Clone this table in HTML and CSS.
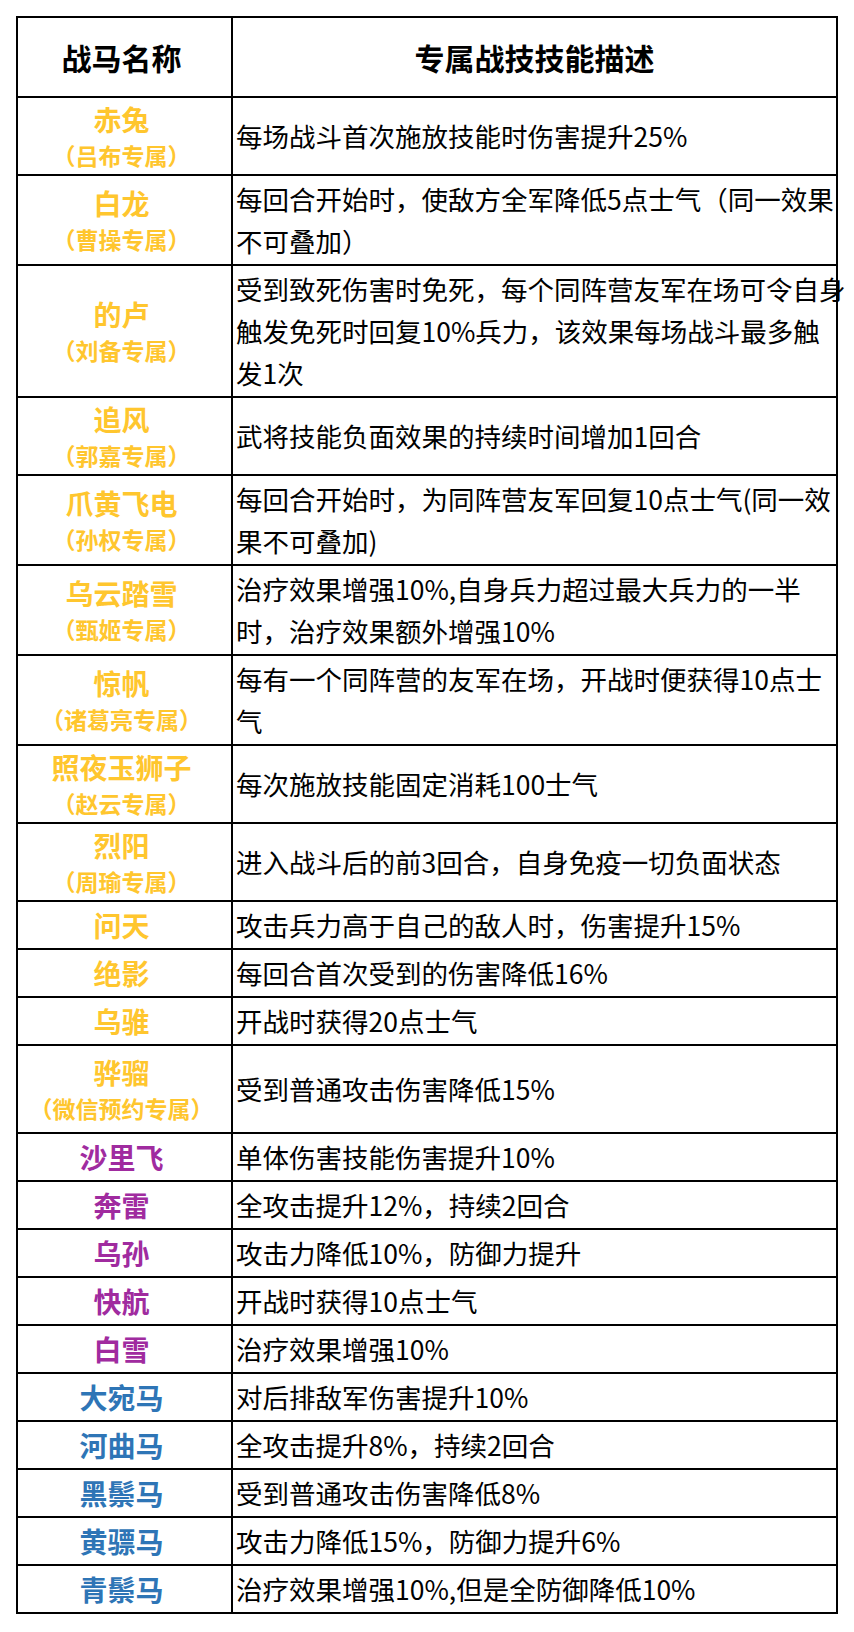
FILE: index.html
```html
<!DOCTYPE html>
<html lang="zh-CN">
<head>
<meta charset="utf-8">
<title>战马专属战技</title>
<link rel="stylesheet" href="styles.css">
</head>
<body>
<table class="horses">
  <colgroup><col class="c-name"><col class="c-desc"></colgroup>
  <thead>
    <tr><th>战马名称</th><th>专属战技技能描述</th></tr>
  </thead>
  <tbody>
    <tr><td class="name gold"><span class="nm">赤兔</span><span class="sub">（吕布专属）</span></td><td class="desc">每场战斗首次施放技能时伤害提升25%</td></tr>
    <tr><td class="name gold"><span class="nm">白龙</span><span class="sub">（曹操专属）</span></td><td class="desc">每回合开始时，使敌方全军降低5点士气（同一效果<br>不可叠加）</td></tr>
    <tr><td class="name gold"><span class="nm">的卢</span><span class="sub">（刘备专属）</span></td><td class="desc">受到致死伤害时免死，每个同阵营友军在场可令自身<br>触发免死时回复10%兵力，该效果每场战斗最多触<br>发1次</td></tr>
    <tr><td class="name gold"><span class="nm">追风</span><span class="sub">（郭嘉专属）</span></td><td class="desc">武将技能负面效果的持续时间增加1回合</td></tr>
    <tr><td class="name gold"><span class="nm">爪黄飞电</span><span class="sub">（孙权专属）</span></td><td class="desc">每回合开始时，为同阵营友军回复10点士气(同一效<br>果不可叠加)</td></tr>
    <tr><td class="name gold"><span class="nm">乌云踏雪</span><span class="sub">（甄姬专属）</span></td><td class="desc">治疗效果增强10%,自身兵力超过最大兵力的一半<br>时，治疗效果额外增强10%</td></tr>
    <tr><td class="name gold"><span class="nm">惊帆</span><span class="sub">（诸葛亮专属）</span></td><td class="desc">每有一个同阵营的友军在场，开战时便获得10点士<br>气</td></tr>
    <tr><td class="name gold"><span class="nm">照夜玉狮子</span><span class="sub">（赵云专属）</span></td><td class="desc">每次施放技能固定消耗100士气</td></tr>
    <tr><td class="name gold"><span class="nm">烈阳</span><span class="sub">（周瑜专属）</span></td><td class="desc">进入战斗后的前3回合，自身免疫一切负面状态</td></tr>
    <tr><td class="name gold"><span class="nm">问天</span></td><td class="desc">攻击兵力高于自己的敌人时，伤害提升15%</td></tr>
    <tr><td class="name gold"><span class="nm">绝影</span></td><td class="desc">每回合首次受到的伤害降低16%</td></tr>
    <tr><td class="name gold"><span class="nm">乌骓</span></td><td class="desc">开战时获得20点士气</td></tr>
    <tr><td class="name gold tall"><span class="nm">骅骝</span><span class="sub">（微信预约专属）</span></td><td class="desc">受到普通攻击伤害降低15%</td></tr>
    <tr><td class="name purple"><span class="nm">沙里飞</span></td><td class="desc">单体伤害技能伤害提升10%</td></tr>
    <tr><td class="name purple"><span class="nm">奔雷</span></td><td class="desc">全攻击提升12%，持续2回合</td></tr>
    <tr><td class="name purple"><span class="nm">乌孙</span></td><td class="desc">攻击力降低10%，防御力提升</td></tr>
    <tr><td class="name purple"><span class="nm">快航</span></td><td class="desc">开战时获得10点士气</td></tr>
    <tr><td class="name purple"><span class="nm">白雪</span></td><td class="desc">治疗效果增强10%</td></tr>
    <tr><td class="name blue"><span class="nm">大宛马</span></td><td class="desc">对后排敌军伤害提升10%</td></tr>
    <tr><td class="name blue"><span class="nm">河曲马</span></td><td class="desc">全攻击提升8%，持续2回合</td></tr>
    <tr><td class="name blue"><span class="nm">黑鬃马</span></td><td class="desc">受到普通攻击伤害降低8%</td></tr>
    <tr><td class="name blue"><span class="nm">黄骠马</span></td><td class="desc">攻击力降低15%，防御力提升6%</td></tr>
    <tr><td class="name blue"><span class="nm">青鬃马</span></td><td class="desc">治疗效果增强10%,但是全防御降低10%</td></tr>
  </tbody>
</table>
</body>
</html>
```

FILE: styles.css
```css
html, body {
  margin: 0;
  background: #ffffff;
}

body {
  padding: 16px 0 0 16px;
  font-family: "Noto Sans CJK SC", "Microsoft YaHei", "Noto Sans", sans-serif;
  color: #000000;
}

.horses {
  border-collapse: collapse;
  table-layout: fixed;
  width: 822px;
}

.c-name {
  width: 215px;
}

.horses th,
.horses td {
  border: 2px solid #000000;
}

.horses th {
  font-size: 30px;
  font-weight: 700;
  line-height: 42px;
  padding: 18px 0;
  text-align: center;
}

.horses th:first-child {
  padding-right: 6px;
}

.name {
  text-align: center;
  vertical-align: middle;
  padding: 2px 6px 2px 0;
  font-weight: 700;
}

.name.tall {
  padding-top: 7px;
  padding-bottom: 7px;
}

.nm {
  display: block;
  font-size: 28px;
  line-height: 38px;
}

.sub {
  display: block;
  font-size: 23px;
  line-height: 34px;
}

.gold {
  color: #ffc62e;
}

.purple {
  color: #a02b9f;
}

.blue {
  color: #2e75b6;
}

.desc {
  font-size: 26.5px;
  line-height: 42px;
  padding: 2px 2px 2px 3px;
  vertical-align: middle;
  white-space: nowrap;
}
```
